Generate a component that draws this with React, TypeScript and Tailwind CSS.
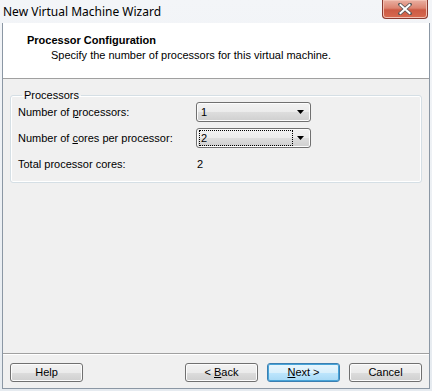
import React from 'react';

function Btn({ children, primary = false }: { children: React.ReactNode; primary?: boolean }) {
  return (
    <div
      className={
        'flex h-[19px] w-[73px] items-center justify-center rounded-[3px] border text-[11px] text-black ' +
        (primary
          ? 'border-[#3c7fb1] bg-[linear-gradient(#eaf6fd_0%,#d9f0fc_50%,#bee6fd_51%,#a7d9f5_100%)] shadow-[inset_0_0_0_1px_#48a4d8]'
          : 'border-[#707070] bg-[linear-gradient(#f2f2f2_0%,#ebebeb_50%,#dddddd_51%,#cfcfcf_100%)] shadow-[inset_0_0_0_1px_#fcfcfc]')
      }
    >
      <span className="whitespace-pre">{children}</span>
    </div>
  );
}

function Combo({ value, focused = false }: { value: string; focused?: boolean }) {
  return (
    <div className="flex h-[20px] w-[115px] items-center rounded-[3px] border border-[#707070] bg-[linear-gradient(#f2f2f2_0%,#ebebeb_50%,#dddddd_51%,#cfcfcf_100%)] pl-[2px] pr-[6px] shadow-[inset_0_0_0_1px_#fcfcfc]">
      <div
        className={
          'flex h-[16px] w-[94px] items-center pl-[1px] text-[11px] ' +
          (focused ? 'border border-dotted border-black' : 'border border-transparent')
        }
      >
        {value}
      </div>
      <svg width="7" height="4" viewBox="0 0 7 4" className="ml-auto">
        <path d="M0 0h7L3.5 4z" fill="#000" />
      </svg>
    </div>
  );
}

function Row({ label, children }: { label: React.ReactNode; children: React.ReactNode }) {
  return (
    <div className="flex h-[20px] items-center">
      <div className="w-[178px] text-[11px]">{label}</div>
      {children}
    </div>
  );
}

export default function App() {
  return (
    <div className="h-[391px] w-[432px] overflow-hidden bg-[linear-gradient(#f3f5f8,#e6ebf0)] font-['Liberation_Sans',Arial,sans-serif] text-black">
      {/* title bar */}
      <div className="flex h-[23px] items-start">
        <div className="pl-[3px] pt-[4px] font-['Noto_Sans',sans-serif] text-[12px] leading-[16px]">
          New Virtual Machine Wizard
        </div>
        <div className="ml-auto mr-[4px] flex h-[19px] w-[46px] items-center justify-center rounded-b-[4px] border border-t-0 border-[#8a3a30] bg-[linear-gradient(#eab0a2_0%,#dc8470_45%,#cc5a44_55%,#d86a50_100%)] shadow-[inset_0_0_0_1px_#f2c0b2]">
          <svg width="14" height="12" viewBox="0 0 14 12">
            <path d="M2 1.5L12 10.5M12 1.5L2 10.5" stroke="#555" strokeWidth="3.6" strokeLinecap="square" />
            <path d="M2.5 2L11.5 10M11.5 2L2.5 10" stroke="#fff" strokeWidth="2" strokeLinecap="square" />
          </svg>
        </div>
      </div>

      {/* client area */}
      <div className="ml-[2px] flex h-[366px] w-[428px] flex-col border-x border-b border-[#8b97a4]">
        <div className="h-[56px] border-b border-[#a0a0a0] bg-white pl-[24px] pt-[9px] text-[11px]">
          <div className="h-[14px] font-bold">Processor Configuration</div>
          <div className="mt-[1px] pl-[24px]">Specify the number of processors for this virtual machine.</div>
        </div>

        <div className="flex-1 bg-[#f0f0f0] px-[7px] pt-[9px]">
          <fieldset className="rounded-[3px] border border-[#d5dfe5] px-[7px] pb-[8px] shadow-[inset_0_0_0_1px_#fff]">
            <legend className="ml-[4px] px-[2px] text-[11px] leading-[14px]">Processors</legend>
            <div className="flex flex-col gap-[6px]">
              <Row label={<>Number of <u>p</u>rocessors:</>}>
                <Combo value="1" />
              </Row>
              <Row label={<>Number of <u>c</u>ores per processor:</>}>
                <Combo value="2" focused />
              </Row>
              <Row label="Total processor cores:">
                <div className="pl-[1px] text-[11px]">2</div>
              </Row>
            </div>
          </fieldset>
        </div>

        <div className="h-[35px] border-t border-[#a0a0a0] bg-[#f0f0f0] shadow-[inset_0_1px_0_#fff]">
          <div className="flex pl-[7px] pr-[7px] pt-[9px]">
            <Btn>Help</Btn>
            <div className="ml-auto flex gap-[9px]">
              <Btn>
                {'< '}
                <u>B</u>ack
              </Btn>
              <Btn primary>
                <u>N</u>
                {'ext >'}
              </Btn>
              <Btn>Cancel</Btn>
            </div>
          </div>
        </div>
      </div>
    </div>
  );
}
